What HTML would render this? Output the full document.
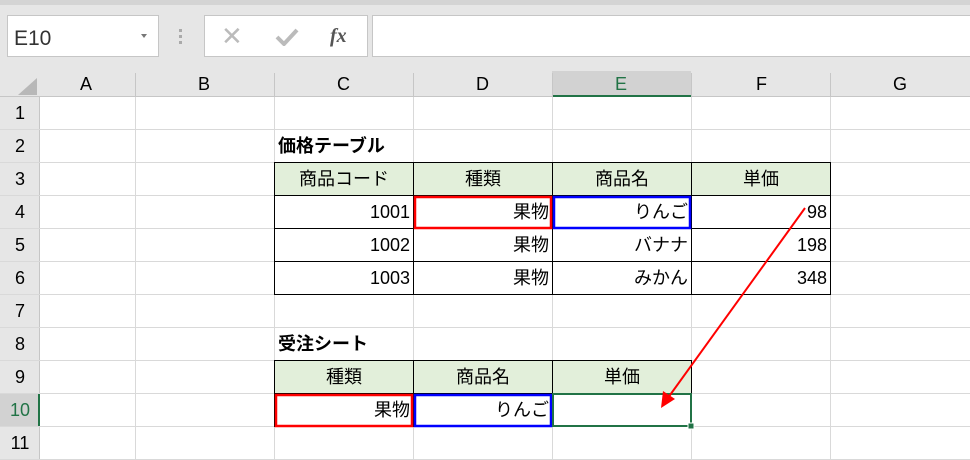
<!DOCTYPE html><html><head><meta charset="utf-8"><style>
body{margin:0;width:970px;height:460px;overflow:hidden;background:#fff;font-family:"Liberation Sans","Noto Sans CJK JP",sans-serif;position:relative}
.a{position:absolute;box-sizing:border-box}
.t{position:absolute;box-sizing:border-box;font-size:18px;line-height:33px;color:#000;white-space:nowrap}
</style></head><body>
<div class="a" style="left:0;top:0;width:970px;height:71px;background:#e6e6e6"></div>
<div class="a" style="left:0;top:0;width:970px;height:5px;background:#d4d4d4"></div>
<div class="a" style="left:7px;top:15px;width:152px;height:42px;background:#fff;border:1px solid #c6c6c6"></div>
<div class="t" style="left:14px;top:22px;font-size:21px;line-height:33px;color:#333">E10</div>
<div class="a" style="left:141px;top:34px;border:3px solid transparent;border-top:4px solid #777"></div>
<div class="a" style="left:179px;top:29px;width:3px;height:15px;background:repeating-linear-gradient(#aaa 0 3px,transparent 3px 6px)"></div>
<div class="a" style="left:204px;top:15px;width:164px;height:42px;background:#fff;border:1px solid #c6c6c6"></div>
<div class="t" style="left:221px;top:20px;font-size:26px;color:#bbb">✕</div>
<svg class="a" style="left:275px;top:28px" width="24" height="18"><polyline points="2,9 9,16 22,2" fill="none" stroke="#bbb" stroke-width="4"/></svg>
<div class="t" style="left:330px;top:20px;font-family:'Liberation Serif';font-style:italic;font-weight:bold;font-size:20px;color:#555">fx</div>
<div class="a" style="left:372px;top:15px;width:600px;height:42px;background:#fff;border:1px solid #c6c6c6"></div>
<div class="a" style="left:0;top:71px;width:970px;height:26px;background:#e6e6e6;border-bottom:1px solid #c6c6c6"></div>
<div class="a" style="left:552px;top:71px;width:139px;height:26px;background:#d2d2d2;border-bottom:2px solid #217346"></div>
<svg class="a" style="left:18px;top:78px" width="19" height="17"><polygon points="19,0 19,17 0,17" fill="#b8b8b8"/></svg>
<div class="a" style="left:0;top:97px;width:40px;height:363px;background:#e6e6e6;border-right:1px solid #c6c6c6"></div>
<div class="a" style="left:0;top:394px;width:40px;height:33px;background:#d2d2d2;border-right:2px solid #217346"></div>
<svg class="a" style="left:0;top:0" width="970" height="460">
<g stroke="#c6c6c6" stroke-width="1">
<line x1="135.5" y1="73" x2="135.5" y2="97"/><line x1="274.5" y1="73" x2="274.5" y2="97"/><line x1="413.5" y1="73" x2="413.5" y2="97"/><line x1="552.5" y1="73" x2="552.5" y2="97"/><line x1="691.5" y1="73" x2="691.5" y2="97"/><line x1="830.5" y1="73" x2="830.5" y2="97"/>
</g>
<g stroke="#d9d9d9" stroke-width="1">
<line x1="135.5" y1="97" x2="135.5" y2="460"/><line x1="274.5" y1="97" x2="274.5" y2="460"/><line x1="413.5" y1="97" x2="413.5" y2="460"/><line x1="552.5" y1="97" x2="552.5" y2="460"/><line x1="691.5" y1="97" x2="691.5" y2="460"/><line x1="830.5" y1="97" x2="830.5" y2="460"/>
<line x1="0" y1="129.5" x2="970" y2="129.5"/><line x1="0" y1="162.5" x2="970" y2="162.5"/><line x1="0" y1="195.5" x2="970" y2="195.5"/><line x1="0" y1="228.5" x2="970" y2="228.5"/><line x1="0" y1="261.5" x2="970" y2="261.5"/><line x1="0" y1="294.5" x2="970" y2="294.5"/><line x1="0" y1="327.5" x2="970" y2="327.5"/><line x1="0" y1="360.5" x2="970" y2="360.5"/><line x1="0" y1="393.5" x2="970" y2="393.5"/><line x1="0" y1="426.5" x2="970" y2="426.5"/><line x1="0" y1="459.5" x2="970" y2="459.5"/>
</g>
<rect x="275" y="163" width="555" height="32" fill="#e2efda"/>
<rect x="275" y="361" width="416" height="32" fill="#e2efda"/>
<g stroke="#000" stroke-width="1" fill="none">
<rect x="274.5" y="162.5" width="556" height="132"/>
<line x1="274.5" y1="195.5" x2="830.5" y2="195.5"/><line x1="274.5" y1="228.5" x2="830.5" y2="228.5"/><line x1="274.5" y1="261.5" x2="830.5" y2="261.5"/>
<line x1="413.5" y1="162.5" x2="413.5" y2="294.5"/><line x1="552.5" y1="162.5" x2="552.5" y2="294.5"/><line x1="691.5" y1="162.5" x2="691.5" y2="294.5"/>
<rect x="274.5" y="360.5" width="417" height="66"/>
<line x1="274.5" y1="393.5" x2="691.5" y2="393.5"/><line x1="413.5" y1="360.5" x2="413.5" y2="426.5"/><line x1="552.5" y1="360.5" x2="552.5" y2="426.5"/>
</g>
<rect x="415" y="197" width="136" height="31" fill="none" stroke="#f00" stroke-width="2.5"/>
<rect x="554" y="197" width="136" height="31" fill="none" stroke="#00f" stroke-width="2.5"/>
<rect x="276" y="395" width="136" height="31" fill="none" stroke="#f00" stroke-width="2.5"/>
<rect x="415" y="395" width="136" height="31" fill="none" stroke="#00f" stroke-width="2.5"/>
<rect x="553" y="394" width="138" height="32" fill="none" stroke="#217346" stroke-width="2"/>
<rect x="688" y="423" width="6" height="6" fill="#217346" stroke="#fff"/>
<line x1="805" y1="208" x2="665" y2="402" stroke="#f00" stroke-width="2"/>
<polygon points="661,408 663,391 675,399" fill="#f00"/>
</svg>
<div class="t" style="left:0;top:71px;width:970px;line-height:26px;font-size:18px">
<span style="position:absolute;left:80px">A</span><span style="position:absolute;left:198px">B</span><span style="position:absolute;left:337px">C</span><span style="position:absolute;left:476px">D</span><span style="position:absolute;left:615px;color:#217346">E</span><span style="position:absolute;left:756px">F</span><span style="position:absolute;left:893px">G</span></div>
<div class="t" style="left:0;top:97px;width:40px;text-align:center;font-size:18px;line-height:33px">1<br>2<br>3<br>4<br>5<br>6<br>7<br>8<br>9<br><span style="color:#217346">10</span><br>11</div>
<div class="t" style="left:278px;top:130px;font-weight:bold">価格テーブル</div>
<div class="t" style="left:278px;top:328px;font-weight:bold">受注シート</div>
<div class="t" style="left:275px;top:163px;width:138px;text-align:center">商品コード</div>
<div class="t" style="left:414px;top:163px;width:138px;text-align:center">種類</div>
<div class="t" style="left:553px;top:163px;width:138px;text-align:center">商品名</div>
<div class="t" style="left:692px;top:163px;width:138px;text-align:center">単価</div>
<div class="t" style="left:275px;top:196px;width:135px;text-align:right">1001</div>
<div class="t" style="left:275px;top:229px;width:135px;text-align:right">1002</div>
<div class="t" style="left:275px;top:262px;width:135px;text-align:right">1003</div>
<div class="t" style="left:414px;top:196px;width:135px;text-align:right">果物</div>
<div class="t" style="left:414px;top:229px;width:135px;text-align:right">果物</div>
<div class="t" style="left:414px;top:262px;width:135px;text-align:right">果物</div>
<div class="t" style="left:553px;top:196px;width:135px;text-align:right">りんご</div>
<div class="t" style="left:553px;top:229px;width:135px;text-align:right">バナナ</div>
<div class="t" style="left:553px;top:262px;width:135px;text-align:right">みかん</div>
<div class="t" style="left:692px;top:196px;width:135px;text-align:right">98</div>
<div class="t" style="left:692px;top:229px;width:135px;text-align:right">198</div>
<div class="t" style="left:692px;top:262px;width:135px;text-align:right">348</div>
<div class="t" style="left:275px;top:361px;width:138px;text-align:center">種類</div>
<div class="t" style="left:414px;top:361px;width:138px;text-align:center">商品名</div>
<div class="t" style="left:553px;top:361px;width:138px;text-align:center">単価</div>
<div class="t" style="left:275px;top:394px;width:135px;text-align:right">果物</div>
<div class="t" style="left:414px;top:394px;width:135px;text-align:right">りんご</div>
</body></html>
